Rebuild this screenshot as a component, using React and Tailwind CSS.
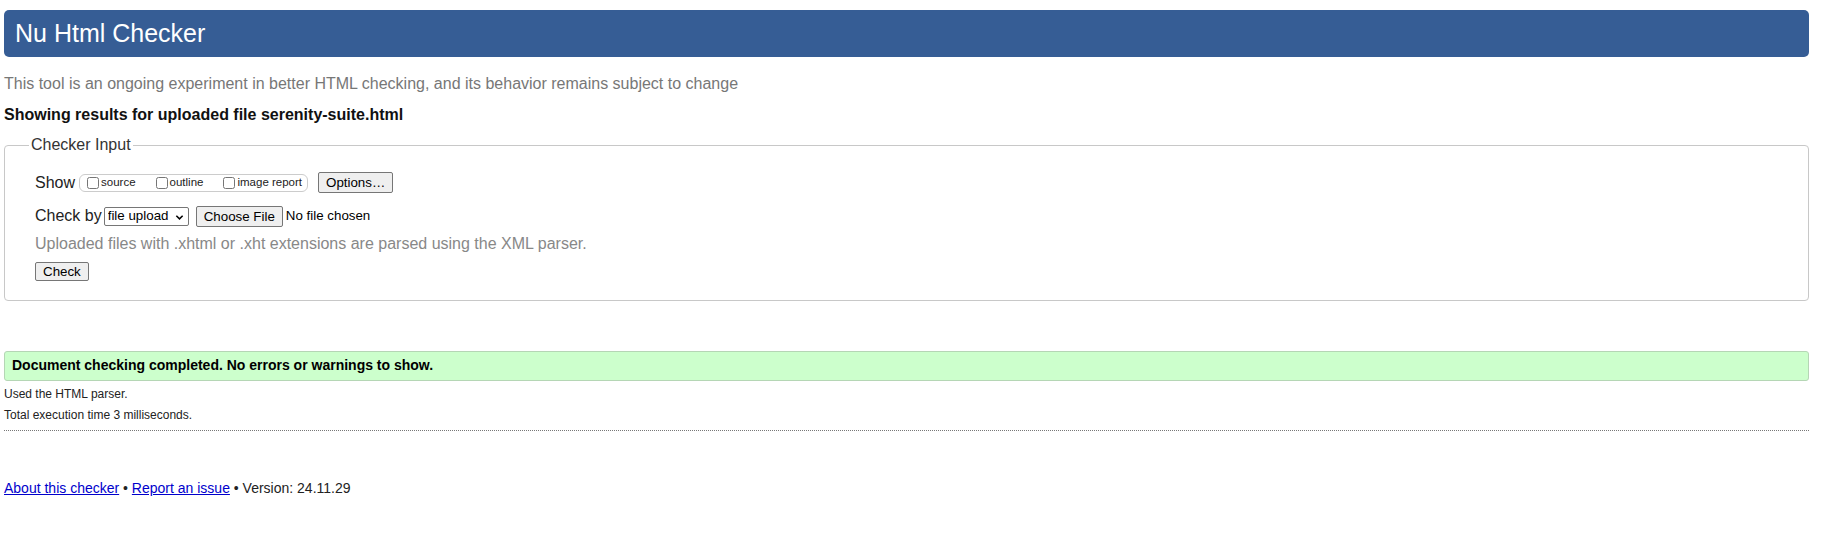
import { useState } from "react";

const font = "font-['Liberation_Sans',Arial,Helvetica,sans-serif]";

const Checkbox = ({ label }) => (
  <label className="flex items-center">
    <input type="checkbox" className="w-[12px] h-[12px] m-0 mr-[2px]" />
    <span className="text-[11.5px] text-[#222]">{label}</span>
  </label>
);

const App = () => {
  const [by, setby] = useState("file upload");

  return (
    <div className={`${font} bg-white min-h-[535px] pl-[4px] pr-[16px] pt-[10px] text-[#222]`}>
      {/* Title bar */}
      <div className="h-[47px] rounded-[5px] bg-[#365d95] flex items-center pl-[11px]">
        <h1 className="text-white text-[25px] leading-none">Nu Html Checker</h1>
      </div>

      <p className="mt-[17px] text-[16px] leading-[20px] text-[#777]">
        This tool is an ongoing experiment in better HTML checking, and its behavior remains subject to change
      </p>
      <p className="mt-[11px] text-[16px] leading-[20px] font-bold text-[#111]">
        Showing results for uploaded file serenity-suite.html
      </p>

      {/* Checker input */}
      <fieldset className="mt-[10px] border border-[#c8c8c8] rounded-[4px] pl-[30px] pb-[17px]">
        <legend className="-ml-[6px] px-[2px] text-[16px] leading-[20px] text-[#333]">Checker Input</legend>

        <div className="mt-[17px] h-[21px] flex items-center">
          <span className="text-[16px] text-[#222]">Show</span>
          <div className="ml-[4px] h-[18px] border border-[#ccc] rounded-[6px] flex items-center pl-[7px] pr-[5px]">
            <Checkbox label="source" />
            <span className="w-[20px]" />
            <Checkbox label="outline" />
            <span className="w-[20px]" />
            <Checkbox label="image report" />
          </div>
          <button className="ml-[10px] h-[21px] px-[7px] bg-[#efefef] border border-[#767676] rounded-[2px] text-[13.33px] text-black">
            Options…
          </button>
        </div>

        <div className="mt-[13px] h-[20px] flex items-center">
          <span className="text-[16px] text-[#222]">Check by</span>
          <span className="relative ml-[2px] h-[19px] flex items-center">
            <select
              value={by}
              onChange={(e) => setby(e.target.value)}
              className="appearance-none h-[19px] w-[85px] pl-[3px] border border-[#767676] rounded-[2px] bg-white text-[13.33px] text-black leading-none"
            >
              <option>address</option>
              <option>file upload</option>
              <option>text input</option>
            </select>
            <svg
              viewBox="0 0 10 10"
              className="absolute right-[5px] top-[6px] w-[9px] h-[9px] pointer-events-none"
            >
              <path d="M1.5 3 L5 6.5 L8.5 3" fill="none" stroke="#000" strokeWidth="1.7" />
            </svg>
          </span>
          <button className="ml-[7px] h-[21px] px-[7px] bg-[#efefef] border border-[#767676] rounded-[2px] text-[13.33px] text-black">
            Choose File
          </button>
          <span className="ml-[3px] text-[13.33px] text-black">No file chosen</span>
        </div>

        <p className="mt-[8px] text-[16px] leading-[20px] text-[#888]">
          Uploaded files with .xhtml or .xht extensions are parsed using the XML parser.
        </p>

        <button className="mt-[8px] h-[19px] px-[7px] bg-[#efefef] border border-[#767676] rounded-[2px] text-[13.33px] text-black leading-none">
          Check
        </button>
      </fieldset>

      {/* Result */}
      <div className="mt-[50px] h-[30px] flex items-center pl-[7px] bg-[#ccffcc] border border-[#b5d6b5] rounded-[3px]">
        <p className="text-[14px] font-bold text-black">
          Document checking completed. No errors or warnings to show.
        </p>
      </div>

      <div className="border-b border-dotted border-[#777] pb-[7px]">
        <p className="mt-[5px] text-[12px] leading-[16px] text-[#222]">Used the HTML parser.</p>
        <p className="mt-[5px] text-[12px] leading-[16px] text-[#222]">Total execution time 3 milliseconds.</p>
      </div>

      <p className="mt-[48px] text-[14px] leading-[18px] text-[#222]">
        <a href="#about" className="text-[#00c] underline">About this checker</a>
        {" • "}
        <a href="#issue" className="text-[#00c] underline">Report an issue</a>
        {" • Version: 24.11.29"}
      </p>
    </div>
  );
};

export default App;
